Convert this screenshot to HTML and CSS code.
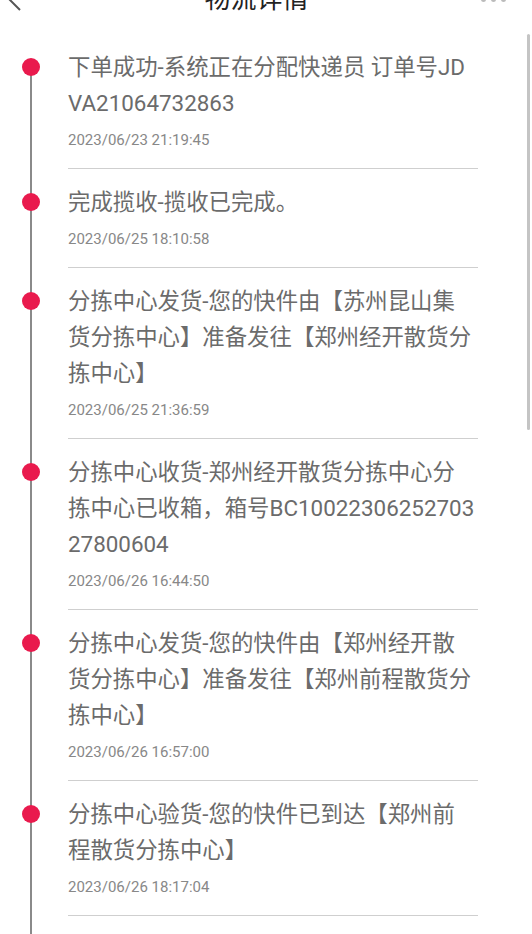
FILE: index.html
```html
<!DOCTYPE html>
<html lang="zh-CN">
<head>
  <meta charset="UTF-8" />
  <meta name="viewport" content="width=device-width, initial-scale=1.0"/>
  <title>物流详情</title>
  <link rel="stylesheet" href="styles.css">
</head>
<body>
  <header class="topbar">
    <svg class="back" width="24" height="28" viewBox="0 0 24 28">
      <polyline points="20,2 8,14 20,26" fill="none" stroke="#555" stroke-width="2"/>
    </svg>
    <h1 class="title">物流详情</h1>
    <div class="more"><i></i><i></i><i></i></div>
  </header>

  <main class="timeline">
    <div class="item">
      <span class="dot"></span>
      <div class="item-body">
        <p class="desc">下单成功-系统正在分配快递员 订单号JDVA21064732863</p>
        <p class="time">2023/06/23 21:19:45</p>
      </div>
    </div>
    <div class="item">
      <span class="dot"></span>
      <div class="item-body">
        <p class="desc">完成揽收-揽收已完成。</p>
        <p class="time">2023/06/25 18:10:58</p>
      </div>
    </div>
    <div class="item">
      <span class="dot"></span>
      <div class="item-body">
        <p class="desc">分拣中心发货-您的快件由【苏州昆山集货分拣中心】准备发往【郑州经开散货分拣中心】</p>
        <p class="time">2023/06/25 21:36:59</p>
      </div>
    </div>
    <div class="item">
      <span class="dot"></span>
      <div class="item-body">
        <p class="desc">分拣中心收货-郑州经开散货分拣中心分拣中心已收箱，箱号BC1002230625270327800604</p>
        <p class="time">2023/06/26 16:44:50</p>
      </div>
    </div>
    <div class="item">
      <span class="dot"></span>
      <div class="item-body">
        <p class="desc">分拣中心发货-您的快件由【郑州经开散货分拣中心】准备发往【郑州前程散货分拣中心】</p>
        <p class="time">2023/06/26 16:57:00</p>
      </div>
    </div>
    <div class="item">
      <span class="dot"></span>
      <div class="item-body">
        <p class="desc">分拣中心验货-您的快件已到达【郑州前程散货分拣中心】</p>
        <p class="time">2023/06/26 18:17:04</p>
      </div>
    </div>
  </main>

  <div class="scroll-thumb"></div>
</body>
</html>
```

FILE: styles.css
```css
* {
  margin: 0;
  padding: 0;
  box-sizing: border-box;
}

html, body {
  height: 100%;
  overflow: hidden;
}

body {
  font-family: Roboto, "Noto Sans CJK SC", sans-serif;
  background-color: #fff;
  color: #6b6b6b;
  position: relative;
}

/* header is partly scrolled out of view */
.topbar {
  height: 34px;
  display: flex;
  align-items: flex-start;
  justify-content: space-between;
  padding: 0 26px 0 0;
}

.back {
  margin-top: -16px;
  flex-shrink: 0;
}

.title {
  font-size: 26px;
  line-height: 26px;
  font-weight: normal;
  color: #222;
  margin-top: -14px;
  margin-left: 8px;
}

.more {
  display: flex;
  gap: 5px;
  margin-top: -3px;
}

.more i {
  width: 5px;
  height: 5px;
  border-radius: 50%;
  background-color: #bbb;
}

.timeline {
  position: relative;
  padding-bottom: 60px;
}

.timeline::before {
  content: "";
  position: absolute;
  left: 30px;
  top: 33px;
  bottom: 0;
  width: 2px;
  background-color: #8a8a8a;
}

.item {
  position: relative;
  padding-left: 68px;
}

.dot {
  position: absolute;
  left: 22px;
  top: 24px;
  width: 18px;
  height: 18px;
  border-radius: 50%;
  background-color: #e91a4d;
}

.item-body {
  width: 410px;
  padding: 15px 0 18px;
  border-bottom: 1px solid #cfcfcf;
}

.desc {
  font-size: 22.4px;
  line-height: 36px;
  width: 408px;
  word-break: break-all;
  color: #6b6b6b;
}

.time {
  font-size: 15px;
  line-height: 20px;
  margin-top: 9px;
  color: #888;
}

.scroll-thumb {
  position: absolute;
  right: 2px;
  top: 34px;
  width: 3px;
  height: 396px;
  border-radius: 2px;
  background-color: #c4c4c4;
}
```
